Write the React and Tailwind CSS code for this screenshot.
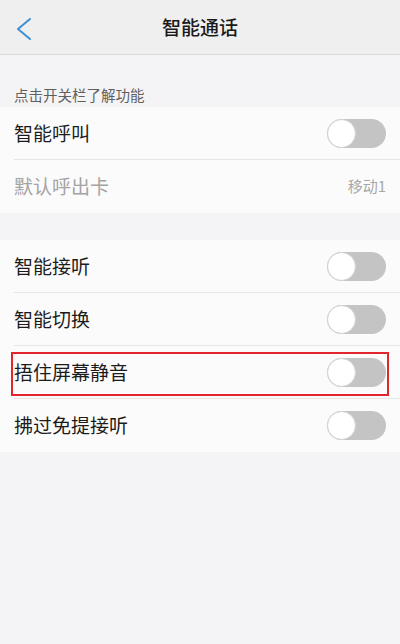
const Toggle = () => (
    <div className="relative w-[59px] h-[29px] rounded-full bg-[#c4c4c4]">
        <div className="absolute left-0 top-0 w-[29px] h-[29px] rounded-full bg-white border border-[#d2d2d2]"></div>
    </div>
);

const Row = ({ label, right, muted, divider = true, highlight }) => (
    <div className="relative h-[53px] flex items-center justify-between pl-[14px] pr-[14px]">
        <span className={`text-[19px] ${muted ? 'text-[#a3a3a3]' : 'text-[#1b1b1b]'}`}>{label}</span>
        {right}
        {divider && <div className="absolute left-[14px] right-0 bottom-0 h-px bg-[#e6e6e6]"></div>}
        {highlight && <div className="absolute left-[11px] right-[11px] top-[6px] h-[44px] border-2 border-[#e3262c]"></div>}
    </div>
);

const App = () => {
    return (
        <div className="w-[400px] h-[644px] bg-[#f4f3f6] font-['Noto_Sans_CJK_SC',sans-serif] overflow-hidden">

            {/* Title bar */}
            <header className="relative h-[55px] bg-[#efefef] border-b border-[#dadada] flex items-center justify-center">
                <svg className="absolute left-[14px] top-[16px]" width="20" height="26" viewBox="0 0 20 26" fill="none">
                    <polyline points="16,3 4,13 16,23" stroke="#3d8fd6" strokeWidth="2" strokeLinecap="round" strokeLinejoin="round" />
                </svg>
                <h1 className="text-[19px] font-medium text-[#1a1a1a]">智能通话</h1>
            </header>

            <div className="h-[52px] flex items-end pb-[1px] pl-[14px]">
                <span className="text-[14.5px] text-[#5f5f5f]">点击开关栏了解功能</span>
            </div>

            <div className="bg-[#fbfbfb]">
                <Row label="智能呼叫" right={<Toggle />} />
                <Row label="默认呼出卡" muted divider={false} right={<span className="text-[15px] text-[#a8a8a8]">移动1</span>} />
            </div>

            <div className="h-[27px]"></div>

            <div className="bg-[#fbfbfb]">
                <Row label="智能接听" right={<Toggle />} />
                <Row label="智能切换" right={<Toggle />} />
                <Row label="捂住屏幕静音" right={<Toggle />} highlight />
                <Row label="拂过免提接听" right={<Toggle />} divider={false} />
            </div>

        </div>
    );
};

export default App;
